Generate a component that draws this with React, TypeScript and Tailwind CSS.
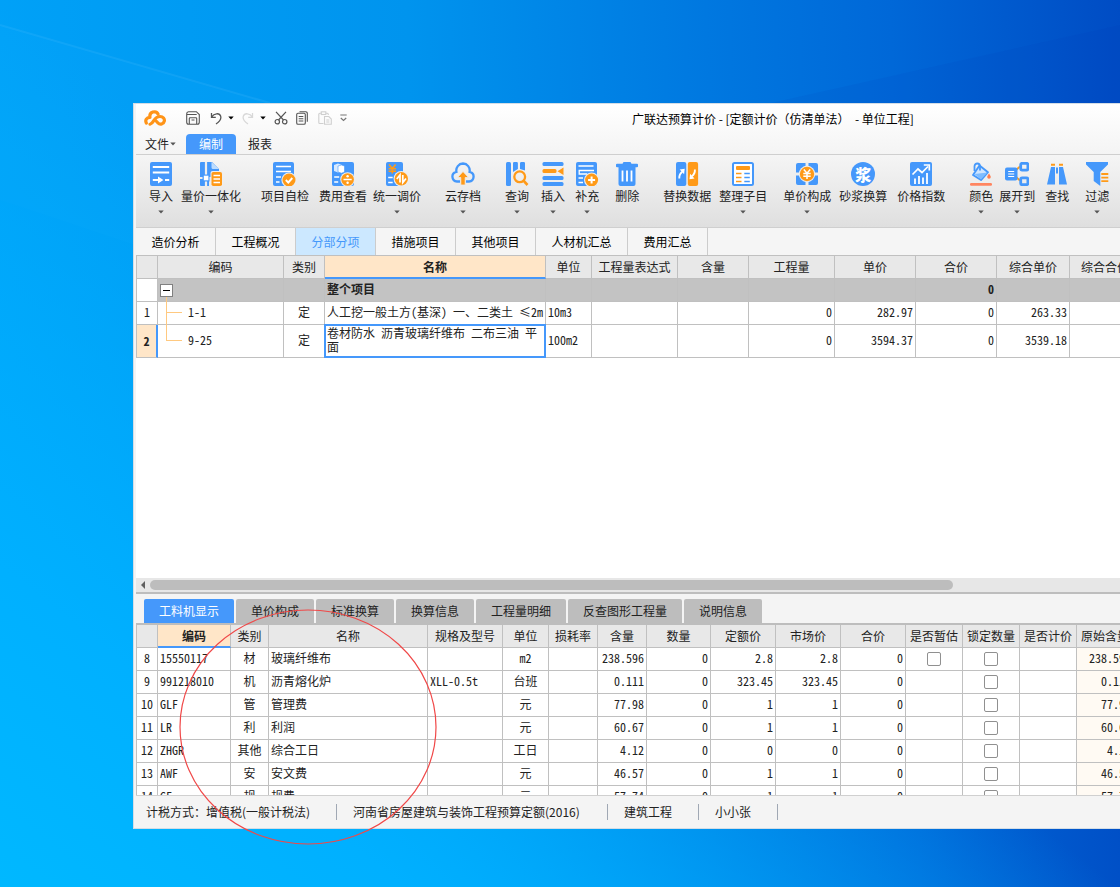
import React from 'react';

const B = '#4598fb';
const O = '#ff9a18';
const G = '#eeeeee';

function Icon({ children }: { children: React.ReactNode }) {
  return (
    <svg viewBox="0 0 24 24" className="block h-6 w-6 shrink-0" fill="none" aria-hidden="true">
      {children}
    </svg>
  );
}

function Caret({ className }: { className: string }) {
  return (
    <svg viewBox="0 0 6 4" className={className} aria-hidden="true">
      <path d="M0.3 0.5h5.4L3 3.4z" fill="currentColor" />
    </svg>
  );
}

const icons: Record<string, React.ReactNode> = {
  import: (
    <Icon>
      <rect x="1" width="22" height="24" rx="2" fill={B} />
      <path d="M3.8 5h16.4M3.8 10.5h16.4M3.8 18h6M16 18h4.2" stroke="#fff" strokeWidth="1.8" />
      <path d="M9 14.6l5.4 3.4L9 21.4z" fill="#fff" />
    </Icon>
  ),
  integrate: (
    <Icon>
      <path d="M2 0h11l7 7v9H10v8H2a1 1 0 0 1-1-1V1a1 1 0 0 1 1-1z" fill={B} />
      <path d="M12.500 0l7.500 7h-6a1.500 1.500 0 0 1-1.500-1.500z" fill="#bcdcff" />
      <path d="M7 0v24M0 16h12" stroke={G} strokeWidth="2.200" />
      <rect x="3.500" y="12.500" width="7" height="7" fill={B} />
      <rect x="4.800" y="13.700" width="4.600" height="4.600" fill="#fff" />
      <rect x="11.500" y="9" width="12.500" height="16" rx="2" fill={G} />
      <rect x="12.500" y="10" width="10.500" height="14" rx="1.800" fill={O} />
      <path d="M14.500 13.500h6.500M14.500 17h6.500M14.500 20.500h6.500" stroke="#fff" strokeWidth="1.500" />
    </Icon>
  ),
  check: (
    <Icon>
      <rect width="21" height="24" rx="2" fill={B} />
      <path d="M3 4.500h15M3 9.500h15M3 15h5M3 20h3.500" stroke="#fff" strokeWidth="1.700" />
      <circle cx="16" cy="18" r="7.600" fill={G} />
      <circle cx="16" cy="18" r="6.500" fill={O} />
      <path d="M12.800 18l2.500 2.500 4-4.500" stroke="#fff" strokeWidth="1.900" />
    </Icon>
  ),
  fee: (
    <Icon>
      <rect x="1" width="22" height="24" rx="2" fill={B} />
      <path d="M3 3l4-1.500 4 1.500v6L7 10.500 3 9z" fill="#d8eaff" />
      <path d="M7 4l3.500-1 3 1v6l-3 1.200L7 10z" fill="#fff" stroke={B} strokeWidth=".6" />
      <path d="M3.200 15h5M3.200 20h4" stroke="#fff" strokeWidth="1.700" />
      <circle cx="16.600" cy="17.500" r="7.300" fill={G} />
      <circle cx="16.600" cy="17.500" r="6.300" fill={O} />
      <path d="M12.500 17.500h8.200" stroke="#fff" strokeWidth="1.500" />
      <circle cx="16.600" cy="14.300" r="1.200" fill="#fff" />
      <circle cx="16.600" cy="20.700" r="1.200" fill="#fff" />
    </Icon>
  ),
  adjust: (
    <Icon>
      <rect x="1" width="17" height="24" rx="2" fill={B} />
      <path d="M4 2.500l3.300 4 3.300-4M3.600 6.800h7.500M3.600 9.300h7.500M7.300 6.500v5" stroke={O} strokeWidth="1.600" />
      <path d="M3.200 15.500h4.500M3.200 20.500h4.500" stroke="#fff" strokeWidth="1.600" />
      <circle cx="16.300" cy="16.800" r="7.700" fill={G} />
      <circle cx="16.300" cy="16.800" r="6.700" fill={O} />
      <path d="M15 20.500v-7.500l-3.200 4M17.800 13v7.500l3.200-4" stroke="#fff" strokeWidth="1.700" />
    </Icon>
  ),
  cloud: (
    <Icon>
      <path
        d="M9 19.500H6a4.900 4.900 0 0 1-.6-9.700A7 7 0 0 1 12 1.500a7 7 0 0 1 6.600 8.300 4.900 4.900 0 0 1-.6 9.700h-3"
        stroke={B}
        strokeWidth="2.300"
      />
      <path d="M12 9.500l5.500 6h-3.300v7.500H9.800v-7.500H6.500z" fill={O} stroke={G} strokeWidth=".8" />
    </Icon>
  ),
  query: (
    <Icon>
      <rect x="1" width="5" height="24" rx="1.500" fill={B} />
      <path d="M9.300 0h2.400a1.200 1.200 0 0 1 1.200 1.200V7L8 10V1.300A1.300 1.300 0 0 1 9.300 0zM16 0h2.800A1.200 1.200 0 0 1 20 1.200V8.500L15 7V1.200A1.200 1.200 0 0 1 16 0z" fill={B} />
      <circle cx="14.700" cy="14.800" r="5.400" stroke={O} strokeWidth="2.300" />
      <path d="M18.500 18.700l4 4.300" stroke={O} strokeWidth="2.600" />
    </Icon>
  ),
  insert: (
    <Icon>
      <rect x="1.500" width="21" height="4" rx="1.500" fill={B} />
      <rect x="1.500" y="7" width="14" height="4" rx="1.500" fill={O} />
      <path d="M22.500 5.500v7.500l-6-3.700z" fill={O} />
      <rect x="1.500" y="14" width="21" height="4" rx="1.500" fill={B} />
      <rect x="1.500" y="20" width="21" height="4" rx="1.500" fill={B} />
    </Icon>
  ),
  supplement: (
    <Icon>
      <rect x="1" width="21" height="24" rx="2" fill={B} />
      <path d="M3.500 4h15M3.500 16h4.500M3.500 20.500h4.500" stroke="#fff" strokeWidth="1.500" />
      <path d="M19 8.500H4.200v3.500h8" stroke="#fff" strokeWidth="1.300" />
      <circle cx="16.600" cy="18" r="7.600" fill={G} />
      <circle cx="16.600" cy="18" r="6.500" fill={O} />
      <path d="M16.600 14.500v7M13.100 18h7" stroke="#fff" strokeWidth="2" />
    </Icon>
  ),
  remove: (
    <Icon>
      <path d="M8.500 0h7l1 1.800H22a1 1 0 0 1 1 1V4.500a1 1 0 0 1-1 .8H2a1 1 0 0 1-1-.8V2.800a1 1 0 0 1 1-1h5.500z" fill={B} />
      <path d="M3.500 4h17v18a2 2 0 0 1-2 2h-13a2 2 0 0 1-2-2z" fill={B} />
      <path d="M7.500 8.500v11M12 8.500v11M16.500 8.500v11" stroke="#fff" strokeWidth="1.800" />
    </Icon>
  ),
  replace: (
    <Icon>
      <rect x="1" width="10.300" height="24" rx="2" fill={B} />
      <rect x="12.800" width="10.300" height="24" rx="2" fill={O} />
      <path d="M4.300 16.500c-.2-3 .8-5 3-6.700" stroke="#fff" strokeWidth="1.900" />
      <path d="M4.700 7.500l5-.8-.6 5.600z" fill="#fff" />
      <path d="M19.900 7.500c.2 3-.8 5-3 6.700" stroke="#fff" strokeWidth="1.900" />
      <path d="M19.500 16.500l-5 .8.600-5.600z" fill="#fff" />
    </Icon>
  ),
  organize: (
    <Icon>
      <rect x="2" y="1" width="20" height="22" rx="1.500" fill="#fff" stroke={B} strokeWidth="2" />
      <rect x="5" y="4" width="14" height="4" rx="1" fill={O} />
      <path d="M5 11.500h5.500M5 15.500h5.500M5 19.500h5.500" stroke={O} strokeWidth="1.700" />
      <path d="M13.300 11.500h5.500M13.300 15.500h5.500M13.300 19.500h5.500" stroke={B} strokeWidth="1.700" />
    </Icon>
  ),
  compose: (
    <Icon>
      <rect x="1" y="1" width="22" height="22" rx="2" fill={B} />
      <path d="M12 0v24M0 12h24" stroke={G} strokeWidth="3" />
      <circle cx="12" cy="12" r="8.200" fill={G} />
      <circle cx="12" cy="12" r="7.200" fill={O} />
      <path d="M8.800 7.500l3.200 3.700 3.200-3.700M8.300 11.600h7.400M8.300 14.200h7.400M12 11v6" stroke="#fff" strokeWidth="1.500" />
    </Icon>
  ),
  mortar: (
    <span className="flex h-6 w-6 items-center justify-center rounded-full bg-[#4598fb] text-base leading-none font-black text-white">
      浆
    </span>
  ),
  index: (
    <Icon>
      <rect x="1" width="22" height="24" rx="2" fill={B} />
      <path d="M3.500 12.500l5.500-5.500 4 3.500 6-6" stroke="#fff" strokeWidth="1.700" />
      <path d="M14.800 3h5.500v5.500" stroke="#fff" strokeWidth="1.700" />
      <path d="M6 22v-5.500M10 22v-8M14 22v-6.500M18 22V11" stroke="#fff" strokeWidth="1.800" />
    </Icon>
  ),
  color: (
    <Icon>
      <path d="M10.500 3.500l8.500 6.700-7 7.800L4 13z" fill="#cfe5ff" stroke={B} strokeWidth="1.900" strokeLinejoin="round" />
      <path d="M5.500 12l13-1.500L12 17.500z" fill="#7ebcff" />
      <path d="M5.500 9V4.500C5.500.5 11 .5 11 4.500v4" stroke={B} strokeWidth="1.800" />
      <path d="M20 11.500c1.300 2 1.800 2.700 1.800 3.500a1.800 1.800 0 0 1-3.600 0c0-.8.500-1.500 1.800-3.500z" fill="#ff7d50" />
      <rect x="1" y="21" width="22" height="2.800" rx="1.200" fill="#ff8560" />
    </Icon>
  ),
  expand: (
    <Icon>
      <path d="M11 8l4-3.500M11 15l4 3.500" stroke={O} strokeWidth="1.800" />
      <rect x="0" y="5.500" width="12.500" height="13" rx="2" fill={B} />
      <path d="M3.200 9.500h6M3.200 12h6M3.200 14.500h6" stroke="#fff" strokeWidth="1" />
      <rect x="15.700" y="1.300" width="7.200" height="6.800" rx="1.500" stroke={B} strokeWidth="2.800" />
      <rect x="15.700" y="15.900" width="7.200" height="6.800" rx="1.500" stroke={B} strokeWidth="2.800" />
    </Icon>
  ),
  find: (
    <Icon>
      <path d="M6 2.700h4M14 2.700h4" stroke={O} strokeWidth="1.900" />
      <path d="M6 5h4v17.500H2zM14 5h4l4 17.500h-8z" fill={B} />
      <path d="M12 5.500v6" stroke={B} strokeWidth="2" />
    </Icon>
  ),
  filter: (
    <Icon>
      <path d="M1 0h22v2.500L15.300 10v14L8.700 19V10L1 2.500z" fill={B} />
      <path d="M16.300 12h7M16.300 15.600h7M16.300 19.200h7" stroke={O} strokeWidth="1.800" />
    </Icon>
  ),
};

const ribbon = [
  { icon: 'import', label: '导入', gap: '', drop: true },
  { icon: 'integrate', label: '量价一体化', gap: 'ml-2', drop: true },
  { icon: 'check', label: '项目自检', gap: 'ml-5', drop: false },
  { icon: 'fee', label: '费用查看', gap: 'ml-2.5', drop: false },
  { icon: 'adjust', label: '统一调价', gap: 'ml-1.5', drop: true },
  { icon: 'cloud', label: '云存档', gap: 'ml-6', drop: true },
  { icon: 'query', label: '查询', gap: 'ml-6', drop: true },
  { icon: 'insert', label: '插入', gap: 'ml-3', drop: true },
  { icon: 'supplement', label: '补充', gap: 'ml-2.5', drop: true },
  { icon: 'remove', label: '删除', gap: 'ml-4', drop: false },
  { icon: 'replace', label: '替换数据', gap: 'ml-6', drop: false },
  { icon: 'organize', label: '整理子目', gap: 'ml-2', drop: true },
  { icon: 'compose', label: '单价构成', gap: 'ml-4', drop: true },
  { icon: 'mortar', label: '砂浆换算', gap: 'ml-2', drop: false },
  { icon: 'index', label: '价格指数', gap: 'ml-2.5', drop: false },
  { icon: 'color', label: '颜色', gap: 'ml-6', drop: true },
  { icon: 'expand', label: '展开到', gap: 'ml-1.5', drop: true },
  { icon: 'find', label: '查找', gap: 'ml-2.5', drop: false },
  { icon: 'filter', label: '过滤', gap: 'ml-4', drop: true },
];

const mainTabs = ['造价分析', '工程概况', '分部分项', '措施项目', '其他项目', '人材机汇总', '费用汇总'];
const detailTabs = ['工料机显示', '单价构成', '标准换算', '换算信息', '工程量明细', '反查图形工程量', '说明信息'];

const mainCols = [
  { label: '', w: 'w-[21px]' },
  { label: '编码', w: 'w-[126px]' },
  { label: '类别', w: 'w-[41px]' },
  { label: '名称', w: 'w-[221px]' },
  { label: '单位', w: 'w-[46px]' },
  { label: '工程量表达式', w: 'w-[86px]' },
  { label: '含量', w: 'w-[71px]' },
  { label: '工程量', w: 'w-[86px]' },
  { label: '单价', w: 'w-[81px]' },
  { label: '合价', w: 'w-[81px]' },
  { label: '综合单价', w: 'w-[73px]' },
  { label: '综合合价', w: 'w-[71px]' },
];

const detailCols = [
  { label: '', w: 'w-[21px]' },
  { label: '编码', w: 'w-[73px]' },
  { label: '类别', w: 'w-[38px]' },
  { label: '名称', w: 'w-[159px]' },
  { label: '规格及型号', w: 'w-[75px]' },
  { label: '单位', w: 'w-[46px]' },
  { label: '损耗率', w: 'w-[49px]' },
  { label: '含量', w: 'w-[49px]' },
  { label: '数量', w: 'w-[64px]' },
  { label: '定额价', w: 'w-[65px]' },
  { label: '市场价', w: 'w-[65px]' },
  { label: '合价', w: 'w-[65px]' },
  { label: '是否暂估', w: 'w-[57px]' },
  { label: '锁定数量', w: 'w-[57px]' },
  { label: '是否计价', w: 'w-[57px]' },
  { label: '原始含量', w: 'w-[57px]' },
];

const detailRows = [
  { n: 8, code: '15550117', kind: '材', name: '玻璃纤维布', spec: '', unit: 'm2', amount: '238.596', quota: '2.8', market: '2.8', est: true },
  { n: 9, code: '991218010', kind: '机', name: '沥青熔化炉', spec: 'XLL-0.5t', unit: '台班', amount: '0.111', quota: '323.45', market: '323.45', est: false },
  { n: 10, code: 'GLF', kind: '管', name: '管理费', spec: '', unit: '元', amount: '77.98', quota: '1', market: '1', est: false },
  { n: 11, code: 'LR', kind: '利', name: '利润', spec: '', unit: '元', amount: '60.67', quota: '1', market: '1', est: false },
  { n: 12, code: 'ZHGR', kind: '其他', name: '综合工日', spec: '', unit: '工日', amount: '4.12', quota: '0', market: '0', est: false },
  { n: 13, code: 'AWF', kind: '安', name: '安文费', spec: '', unit: '元', amount: '46.57', quota: '1', market: '1', est: false },
  { n: 14, code: 'GF', kind: '规', name: '规费', spec: '', unit: '元', amount: '57.74', quota: '1', market: '1', est: false },
];

const box = 'h-[23px] border-r border-b border-[#c0c0c0] p-0';
const cell = box + ' px-0.5 pb-0.5';
const num = cell + ' text-right';
const mid = cell + ' text-center';
const gridFont =
  "table-fixed border-separate border-spacing-0 border-l border-[#c0c0c0] text-xs leading-[14px] whitespace-nowrap text-[#222] [font-family:'Noto_Sans_Mono_CJK_SC','Noto_Sans_CJK_SC',monospace]";

function HeaderRow({ cols, active }: { cols: { label: string; w: string }[]; active: string }) {
  return (
    <thead>
      <tr>
        {cols.map((c, i) => (
          <th
            key={i}
            scope="col"
            className={
              'h-[23px] border-r border-r-[#c0c0c0] p-0 text-center ' +
              c.w +
              (c.label === active
                ? ' border-b-2 border-b-[#4598fb] bg-[#ffe6c8] font-bold'
                : ' border-b border-b-[#c0c0c0] bg-[#e8e8e8] font-normal')
            }
          >
            {c.label}
          </th>
        ))}
      </tr>
    </thead>
  );
}

function Check({ label }: { label: string }) {
  return (
    <input
      type="checkbox"
      aria-label={label}
      className="mx-auto block h-3.5 w-3.5 appearance-none rounded-xs border border-[#909090] bg-white"
    />
  );
}

function QuickBar() {
  return (
    <div className="flex w-[496px] shrink-0 items-center pb-0.5 pl-2 text-[#555]">
      <svg viewBox="0 0 22 16" className="h-4 w-[22px]" fill="none" aria-hidden="true">
        <g stroke="#ff9418" strokeWidth="3.200" strokeLinecap="round" strokeLinejoin="round">
          <path d="M2.300 13C.9 10.300 2.600 7.200 6 7.300 4.800 1.600 12.200.2 14 4" />
          <path d="M6 14.200c1.600-.3 2.700-1.700 3.800-3.500 1.400-2.300 3.300-4.200 6.200-4.200 3.200 0 4.800 2.300 4.300 4.700-.6 3-4.300 4-6.300 1.800L12.600 11.500" />
        </g>
      </svg>
      <button type="button" aria-label="保存" className="ml-5">
        <svg viewBox="0 0 14 14" className="h-3.5 w-3.5" fill="none" stroke="currentColor">
          <path d="M2.500.7h7.800l3 2.800v7.700a2 2 0 0 1-2 2H2.700a2 2 0 0 1-2-2V2.700a2 2 0 0 1 1.800-2zM.9 3.500h9.800M3.300 13V7.500a.8.800 0 0 1 .8-.8h5.800a.8.800 0 0 1 .8.800V13M5.500 9h3" strokeWidth="1.100" />
        </svg>
      </button>
      <button type="button" aria-label="撤销" className="ml-2.5">
        <svg viewBox="0 0 12 14" className="h-3.5 w-3" fill="none" stroke="currentColor" strokeWidth="1.300">
          <path d="M1.500 2v4.300h4.300M1.700 6C4 2.200 9.500 1.500 10.700 5.300c1 3.700-2.200 6-4.700 7.700" />
        </svg>
      </button>
      <Caret className="ml-1.5 h-1 w-1.5 text-black" />
      <button type="button" aria-label="恢复" className="ml-2 text-[#d8d8d8]">
        <svg viewBox="0 0 12 14" className="h-3.5 w-3" fill="none" stroke="currentColor" strokeWidth="1.300">
          <path d="M10.500 2v4.300H6.200M10.300 6C8 2.200 2.500 1.500 1.300 5.300c-1 3.700 2.200 6 4.700 7.700" />
        </svg>
      </button>
      <Caret className="ml-1.5 h-1 w-1.5 text-black" />
      <button type="button" aria-label="剪切" className="ml-2">
        <svg viewBox="0 0 14 14" className="h-3.5 w-3.5" fill="none" stroke="currentColor" strokeWidth="1.200">
          <circle cx="3.300" cy="10.700" r="2.200" />
          <circle cx="10.700" cy="10.700" r="2.200" />
          <path d="M2 .8l7.500 8.200M12 .8L4.500 9" />
        </svg>
      </button>
      <button type="button" aria-label="复制" className="ml-2">
        <svg viewBox="0 0 12 14" className="h-3.5 w-3" fill="none" stroke="currentColor" strokeWidth="1.100">
          <path d="M3.500.8h6.300a1.500 1.500 0 0 1 1.500 1.500v8.500" />
          <rect x=".7" y="2.200" width="8.600" height="11" rx="1.300" />
          <path d="M2.700 5.500h4.600M2.700 7.700h4.600M2.700 10h4.600" />
        </svg>
      </button>
      <button type="button" aria-label="粘贴" className="ml-2.5 text-[#cfcfcf]">
        <svg viewBox="0 0 14 14" className="h-3.5 w-3.5" fill="none" stroke="currentColor" strokeWidth="1.100">
          <path d="M5.500 12.500H1.800a1 1 0 0 1-1-1V3.300a1 1 0 0 1 1-1H3M8 2.300h1.300a1 1 0 0 1 1 1V4" />
          <rect x="3.300" y=".8" width="4.500" height="2.700" />
          <path d="M6.500 5.500h4.300l2.500 2.500v5.300H6.500zM8.300 9h3M8.300 11h3" />
        </svg>
      </button>
      <button type="button" aria-label="自定义快速访问工具栏" className="ml-2">
        <svg viewBox="0 0 7 8" className="h-2 w-[7px]" fill="none" stroke="#777" strokeWidth="1.200">
          <path d="M.3 1h6.400M.8 4l2.700 2.500L6.200 4" />
        </svg>
      </button>
    </div>
  );
}

export default function App() {
  return (
    <div className="relative flex h-screen min-h-[640px] flex-col overflow-hidden bg-[linear-gradient(88deg,#00a2f8_0%,#0094ee_38%,#0078e0_64%,#0068d8_80%,#004cc4_100%)] pt-[103px] pb-[58px] pl-[133px] text-xs text-[#222] [font-family:'Noto_Sans_CJK_SC',sans-serif]">
      <div className="absolute inset-0 bg-[linear-gradient(to_top_right,#00b8ff_0%,#00b0ff_18%,transparent_50%)]" />
      <svg className="absolute inset-0 h-full w-full" viewBox="0 0 1120 887" preserveAspectRatio="none" aria-hidden="true">
        <path d="M0 25L300 112V300L0 200z" fill="#10b0ff" opacity=".12" />
        <path d="M0 25L270 103" stroke="#5cc4ff" strokeWidth="2" opacity=".16" />
        <path d="M740 110L1120 25V110z" fill="#0038b8" opacity=".08" />
      </svg>

      <main className="relative flex min-h-0 flex-1 flex-col overflow-hidden border-t border-b border-l border-[#d3dde6] bg-[#f4f4f4] pl-0.5">
        <header className="bg-linear-to-b from-white to-[#f4f4f4]">
          <div className="flex h-[30px]">
            <QuickBar />
            <h1 className="self-center whitespace-nowrap text-black">{'广联达预算计价 - [定额计价（仿清单法）\u00a0 - 单位工程]'}</h1>
          </div>
          <nav className="flex h-5 pl-[9px] leading-5">
            <button type="button" className="flex items-center">
              文件
              <Caret className="ml-px h-1 w-1.5 text-[#555]" />
            </button>
            <button type="button" className="ml-2.5 w-[50px] rounded-t-sm bg-[#4598fb] text-white">编制</button>
            <button type="button" className="ml-3">报表</button>
          </nav>
        </header>

        <section className="flex h-[74px] shrink-0 items-start overflow-hidden border-t border-b border-[#cfcfcf] bg-linear-to-b from-[#f5f5f5] to-[#dfdfdf] pt-[7px] pl-[13px]">
          {ribbon.map((r) => (
            <button key={r.icon} type="button" className={'flex shrink-0 flex-col items-center whitespace-nowrap ' + r.gap}>
              {icons[r.icon]}
              <span className="mt-[3px] leading-[14px]">{r.label}</span>
              {r.drop && <Caret className="mt-[7px] h-1 w-1.5 text-[#555]" />}
            </button>
          ))}
        </section>

        <nav className="flex h-[27px] shrink-0 bg-[#f5f5f5]">
          {mainTabs.map((t) => (
            <button
              key={t}
              type="button"
              className={
                'border-r border-[#cccccc] ' +
                (t === '人材机汇总' ? 'w-[92px] ' : 'w-20 ') +
                (t === '分部分项' ? 'bg-[#cce8ff] text-[#4598fb]' : 'text-black')
              }
            >
              {t}
            </button>
          ))}
        </nav>

        <section className="min-h-0 flex-1 overflow-hidden border-t border-[#c0c0c0] bg-white">
          <table className={gridFont + ' w-[1004px]'}>
            <HeaderRow cols={mainCols} active="名称" />
            <tbody>
              <tr className="bg-[#c3c3c3] font-bold">
                <td className={cell + ' bg-white'} />
                <td className={box + ' relative px-0.5'}>
                  <button
                    type="button"
                    aria-label="折叠"
                    className="flex h-[13px] w-[13px] items-center justify-center border border-[#808080] bg-white"
                  >
                    <span className="h-px w-[7px] bg-black" />
                  </button>
                  <span className="absolute bottom-0 left-2 h-1 w-px bg-[#ffc980]" />
                </td>
                <td className={cell} />
                <td className={cell}>整个项目</td>
                <td className={cell} />
                <td className={cell} />
                <td className={cell} />
                <td className={cell} />
                <td className={cell} />
                <td className={num}>0</td>
                <td className={cell} />
                <td className={cell} />
              </tr>
              <tr>
                <td className={mid}>1</td>
                <td className={cell + ' relative pl-[30px]'}>
                  <span className="absolute -top-px -bottom-px left-2 w-px bg-[#ffc980]" />
                  <span className="absolute top-2.5 left-2 h-px w-4 bg-[#ffc980]" />
                  1-1
                </td>
                <td className={mid}>定</td>
                <td className={cell}>人工挖一般土方(基深) 一、二类土 ≤2m</td>
                <td className={cell}>10m3</td>
                <td className={cell} />
                <td className={cell} />
                <td className={num}>0</td>
                <td className={num}>282.97</td>
                <td className={num}>0</td>
                <td className={num}>263.33</td>
                <td className={cell} />
              </tr>
              <tr>
                <td className="h-[33px] border-r-2 border-b border-r-[#4598fb] border-b-[#c0c0c0] bg-[#ffe6c8] p-0 text-center font-bold">2</td>
                <td className={cell + ' relative pl-[30px]'}>
                  <span className="absolute top-0 left-2 h-4 w-4 border-b border-l border-[#ffc980]" />
                  9-25
                </td>
                <td className={mid}>定</td>
                <td className={cell + ' relative whitespace-normal'}>
                  卷材防水 沥青玻璃纤维布 二布三油 平面
                  <span className="pointer-events-none absolute -inset-px border-2 border-[#4598fb]" />
                </td>
                <td className={cell}>100m2</td>
                <td className={cell} />
                <td className={cell} />
                <td className={num}>0</td>
                <td className={num}>3594.37</td>
                <td className={num}>0</td>
                <td className={num}>3539.18</td>
                <td className={cell} />
              </tr>
            </tbody>
          </table>
        </section>

        <div className="flex h-3.5 shrink-0 items-center bg-[#e7e7e7] pl-[5px]">
          <svg viewBox="0 0 4 8" className="h-2 w-1" aria-hidden="true">
            <path d="M4 0v8L0 4z" fill="#606060" />
          </svg>
          <div className="ml-[5px] h-2.5 w-[82%] rounded-full bg-[#bdbdbd]" />
        </div>

        <nav className="flex h-[31px] shrink-0 items-stretch gap-0.5 border-t-2 border-[#bdbdbd] bg-[#f4f4f4] pt-[5px] pl-2">
          {detailTabs.map((t, i) => (
            <button
              key={t}
              type="button"
              className={
                'shrink-0 rounded-t-xs px-[15px] whitespace-nowrap ' +
                (i === 0 ? 'bg-[#4598fb] text-white' : 'bg-[#bdbdbd]')
              }
            >
              {t}
            </button>
          ))}
        </nav>

        <section className="h-[173px] shrink-0 overflow-hidden border-t-2 border-b border-t-[#bdbdbd] border-b-[#d0d0d0] bg-white">
          <table className={gridFont + ' w-[997px]'}>
            <HeaderRow cols={detailCols} active="编码" />
            <tbody>
              {detailRows.map((r) => (
                <tr key={r.n}>
                  <td className={mid + ' px-0'}>{r.n}</td>
                  <td className={cell}>{r.code}</td>
                  <td className={mid}>{r.kind}</td>
                  <td className={cell}>{r.name}</td>
                  <td className={cell}>{r.spec}</td>
                  <td className={mid}>{r.unit}</td>
                  <td className={cell} />
                  <td className={num}>{r.amount}</td>
                  <td className={num}>0</td>
                  <td className={num}>{r.quota}</td>
                  <td className={num}>{r.market}</td>
                  <td className={num}>0</td>
                  <td className={box}>{r.est && <Check label={'是否暂估 ' + r.name} />}</td>
                  <td className={box}>
                    <Check label={'锁定数量 ' + r.name} />
                  </td>
                  <td className={cell} />
                  <td className={num + ' bg-[#fffaf3]'}>{r.amount}</td>
                </tr>
              ))}
            </tbody>
          </table>
        </section>

        <footer className="flex h-8 shrink-0 items-center pb-px pl-2.5 whitespace-nowrap">
          <span className="w-[190px]">计税方式：增值税(一般计税法)</span>
          <span className="h-4 w-px bg-[#a0a8b4]" />
          <span className="w-[270px] pl-4">河南省房屋建筑与装饰工程预算定额(2016)</span>
          <span className="h-4 w-px bg-[#a0a8b4]" />
          <span className="w-[90px] pl-4">建筑工程</span>
          <span className="h-4 w-px bg-[#a0a8b4]" />
          <span className="w-[78px] pl-4">小小张</span>
          <span className="h-4 w-px bg-[#a0a8b4]" />
        </footer>
      </main>

      <svg viewBox="0 0 258 236" className="pointer-events-none absolute bottom-[42px] left-[179px] h-[236px] w-[258px]" aria-hidden="true">
        <ellipse cx="129" cy="118" rx="128" ry="117" fill="none" stroke="#f04848" strokeWidth="1.200" />
      </svg>
    </div>
  );
}
